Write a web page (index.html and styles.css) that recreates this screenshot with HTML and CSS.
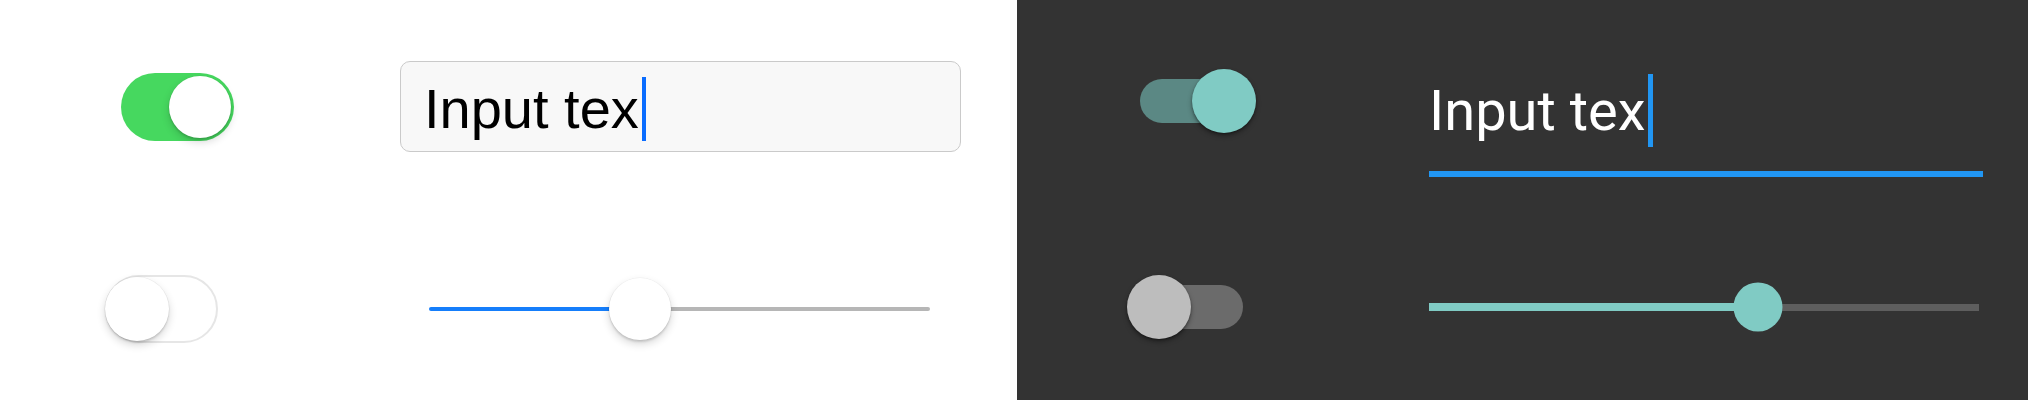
FILE: index.html
```html
<!DOCTYPE html>
<html lang="en">
<head>
<meta charset="utf-8">
<title>Controls</title>
<link rel="stylesheet" href="styles.css">
</head>
<body>
<main class="showcase">
  <section class="panel panel--light">
    <div class="ios-switch ios-switch--on"><span class="ios-switch__thumb"></span></div>
    <div class="ios-input">
      <span class="ios-input__text">Input tex</span><span class="caret caret--ios"></span>
    </div>
    <div class="ios-switch ios-switch--off"><span class="ios-switch__thumb"></span></div>
    <div class="ios-slider" style="--value: 42.1%">
      <span class="ios-slider__fill"></span><span class="ios-slider__rest"></span>
      <span class="ios-slider__thumb"></span>
    </div>
  </section>
  <section class="panel panel--dark">
    <div class="md-switch md-switch--on"><span class="md-switch__track"></span><span class="md-switch__thumb"></span></div>
    <div class="md-input">
      <div class="md-input__line"><span class="md-input__text">Input tex</span><span class="caret caret--md"></span></div>
      <div class="md-input__underline"></div>
    </div>
    <div class="md-switch md-switch--off"><span class="md-switch__track"></span><span class="md-switch__thumb"></span></div>
    <div class="md-slider" style="--value: 59.8%">
      <span class="md-slider__fill"></span><span class="md-slider__rest"></span>
      <span class="md-slider__thumb"></span>
    </div>
  </section>
</main>
</body>
</html>
```
FILE: styles.css
```css
html, body {
  margin: 0;
  padding: 0;
  height: 400px;
  overflow: hidden;
}

.showcase {
  display: flex;
  height: 400px;
  overflow: hidden;
}

.panel {
  box-sizing: border-box;
  display: grid;
  align-items: center;
  flex: none;
}

/* ---------- Light (iOS) ---------- */
.panel--light {
  width: 1017px;
  background: #ffffff;
  padding-left: 105px;
  grid-template-columns: 295px 561px;
  grid-template-rows: 213px 192px;
  font-family: "Liberation Sans", Arial, sans-serif;
}

.ios-switch {
  position: relative;
  box-sizing: border-box;
  width: 113px;
  height: 68px;
  border-radius: 34px;
}

.ios-switch--on {
  background: #46d85f;
  margin-left: 16px;
}

.ios-switch--off {
  background: #ffffff;
  border: 2px solid #e6e6e6;
}

.ios-switch__thumb {
  position: absolute;
  border-radius: 50%;
  background: #ffffff;
  box-shadow: 0 0 0 0.5px rgba(0, 0, 0, 0.06), 0 4px 9px rgba(0, 0, 0, 0.16), 0 2px 2px rgba(0, 0, 0, 0.12);
}

.ios-switch--on .ios-switch__thumb {
  width: 62px;
  height: 62px;
  top: 3px;
  right: 3px;
}

.ios-switch--off .ios-switch__thumb {
  width: 64px;
  height: 64px;
  top: 0;
  left: -2px;
}

.ios-input {
  box-sizing: border-box;
  height: 91px;
  border: 1px solid #cacaca;
  border-radius: 10px;
  background: #f8f8f8;
  display: flex;
  align-items: center;
  padding: 4px 0 0 23px;
}

.ios-input__text {
  font-size: 56px;
  line-height: 71px;
  color: #000000;
}

.caret {
  display: block;
  flex: none;
}

.caret--ios {
  width: 4px;
  height: 64px;
  margin-left: 3px;
  background: #0a6cff;
}

.ios-slider {
  position: relative;
  height: 64px;
  margin: 0 31px 0 29px;
  display: flex;
  align-items: center;
}

.ios-slider__fill {
  width: var(--value);
  height: 4px;
  border-radius: 2px 0 0 2px;
  background: #157efb;
}

.ios-slider__rest {
  flex: 1;
  height: 4px;
  border-radius: 0 2px 2px 0;
  background: #b6b6b6;
}

.ios-slider__thumb {
  position: absolute;
  left: var(--value);
  top: 50%;
  width: 62px;
  height: 62px;
  transform: translate(-50%, -50%);
  border-radius: 50%;
  background: #ffffff;
  box-shadow: 0 0 0 0.5px rgba(0, 0, 0, 0.06), 0 4px 9px rgba(0, 0, 0, 0.16), 0 2px 2px rgba(0, 0, 0, 0.12);
}

/* ---------- Dark (Material) ---------- */
.panel--dark {
  width: 1011px;
  background: #333333;
  padding-left: 110px;
  grid-template-columns: 302px 554px;
  grid-template-rows: 202px 210px;
  font-family: Roboto, "Noto Sans", sans-serif;
}

.md-switch {
  position: relative;
  width: 129px;
  height: 65px;
  display: flex;
  align-items: center;
}

.md-switch__track {
  flex: 1;
  height: 44px;
  margin: 0 13px;
  border-radius: 22px;
}

.md-switch--on .md-switch__track {
  background: #5b8884;
}

.md-switch--off .md-switch__track {
  background: #6b6b6b;
}

.md-switch__thumb {
  position: absolute;
  top: 50%;
  width: 64px;
  height: 64px;
  transform: translateY(-50%);
  border-radius: 50%;
  box-shadow: 0 3px 5px rgba(0, 0, 0, 0.35), 0 1px 2px rgba(0, 0, 0, 0.3);
}

.md-switch--on .md-switch__thumb {
  right: 0;
  background: #80cbc4;
}

.md-switch--off .md-switch__thumb {
  left: 0;
  background: #bdbdbd;
}

.md-input {
  align-self: start;
  margin-top: 74px;
}

.md-input__line {
  display: flex;
  height: 74px;
}

.md-input__text {
  font-size: 56px;
  line-height: 74px;
  color: #ffffff;
}

.caret--md {
  width: 5px;
  height: 73px;
  margin-left: 3px;
  background: #2196f3;
}

.md-input__underline {
  height: 6px;
  margin-top: 23px;
  background: #2196f3;
}

.md-slider {
  position: relative;
  height: 49px;
  margin-right: 4px;
  display: flex;
  align-items: center;
}

.md-slider__fill {
  width: var(--value);
  height: 8px;
  background: #80cbc4;
}

.md-slider__rest {
  flex: 1;
  height: 7px;
  background: #5e5e5e;
}

.md-slider__thumb {
  position: absolute;
  left: var(--value);
  top: 50%;
  width: 49px;
  height: 49px;
  transform: translate(-50%, -50%);
  border-radius: 50%;
  background: #80cbc4;
}
```
